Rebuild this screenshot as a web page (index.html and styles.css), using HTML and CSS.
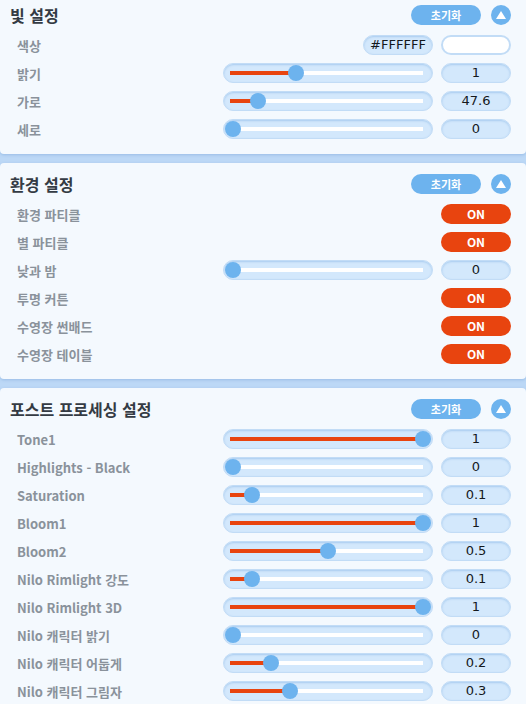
FILE: index.html
```html
<!DOCTYPE html>
<html lang="ko">
<head>
    <meta charset="UTF-8">
    <meta name="viewport" content="width=device-width, initial-scale=1.0">
    <title>설정</title>
    <link rel="stylesheet" href="styles.css">
</head>
<body>
    <div class="settings">
        <section class="panel">
            <div class="panel-head">
                <h2>빛 설정</h2>
                <button class="reset-btn">초기화</button>
                <button class="fold-btn"><span class="tri"></span></button>
            </div>
            <div class="row">
                <span class="label">색상</span>
                <div class="field hex">#FFFFFF</div>
                <div class="swatch"></div>
            </div>
            <div class="row">
                <span class="label">밝기</span>
                <div class="slider"><div class="track"><div class="fill" style="width: 33.3%"></div><div class="rail"><div class="thumb" style="left: 33.3%"></div></div></div></div>
                <div class="field">1</div>
            </div>
            <div class="row">
                <span class="label">가로</span>
                <div class="slider"><div class="track"><div class="fill" style="width: 13.2%"></div><div class="rail"><div class="thumb" style="left: 13.2%"></div></div></div></div>
                <div class="field">47.6</div>
            </div>
            <div class="row">
                <span class="label">세로</span>
                <div class="slider"><div class="track"><div class="fill" style="width: 0%"></div><div class="rail"><div class="thumb" style="left: 0%"></div></div></div></div>
                <div class="field">0</div>
            </div>
        </section>

        <section class="panel">
            <div class="panel-head">
                <h2>환경 설정</h2>
                <button class="reset-btn">초기화</button>
                <button class="fold-btn"><span class="tri"></span></button>
            </div>
            <div class="row">
                <span class="label">환경 파티클</span>
                <button class="toggle">ON</button>
            </div>
            <div class="row">
                <span class="label">별 파티클</span>
                <button class="toggle">ON</button>
            </div>
            <div class="row">
                <span class="label">낮과 밤</span>
                <div class="slider"><div class="track"><div class="fill" style="width: 0%"></div><div class="rail"><div class="thumb" style="left: 0%"></div></div></div></div>
                <div class="field">0</div>
            </div>
            <div class="row">
                <span class="label">투명 커튼</span>
                <button class="toggle">ON</button>
            </div>
            <div class="row">
                <span class="label">수영장 썬배드</span>
                <button class="toggle">ON</button>
            </div>
            <div class="row">
                <span class="label">수영장 테이블</span>
                <button class="toggle">ON</button>
            </div>
        </section>

        <section class="panel">
            <div class="panel-head">
                <h2>포스트 프로세싱 설정</h2>
                <button class="reset-btn">초기화</button>
                <button class="fold-btn"><span class="tri"></span></button>
            </div>
            <div class="row">
                <span class="label">Tone1</span>
                <div class="slider"><div class="track"><div class="fill" style="width: 100%"></div><div class="rail"><div class="thumb" style="left: 100%"></div></div></div></div>
                <div class="field">1</div>
            </div>
            <div class="row">
                <span class="label">Highlights - Black</span>
                <div class="slider"><div class="track"><div class="fill" style="width: 0%"></div><div class="rail"><div class="thumb" style="left: 0%"></div></div></div></div>
                <div class="field">0</div>
            </div>
            <div class="row">
                <span class="label">Saturation</span>
                <div class="slider"><div class="track"><div class="fill" style="width: 10%"></div><div class="rail"><div class="thumb" style="left: 10%"></div></div></div></div>
                <div class="field">0.1</div>
            </div>
            <div class="row">
                <span class="label">Bloom1</span>
                <div class="slider"><div class="track"><div class="fill" style="width: 100%"></div><div class="rail"><div class="thumb" style="left: 100%"></div></div></div></div>
                <div class="field">1</div>
            </div>
            <div class="row">
                <span class="label">Bloom2</span>
                <div class="slider"><div class="track"><div class="fill" style="width: 50%"></div><div class="rail"><div class="thumb" style="left: 50%"></div></div></div></div>
                <div class="field">0.5</div>
            </div>
            <div class="row">
                <span class="label">Nilo Rimlight 강도</span>
                <div class="slider"><div class="track"><div class="fill" style="width: 10%"></div><div class="rail"><div class="thumb" style="left: 10%"></div></div></div></div>
                <div class="field">0.1</div>
            </div>
            <div class="row">
                <span class="label">Nilo Rimlight 3D</span>
                <div class="slider"><div class="track"><div class="fill" style="width: 100%"></div><div class="rail"><div class="thumb" style="left: 100%"></div></div></div></div>
                <div class="field">1</div>
            </div>
            <div class="row">
                <span class="label">Nilo 캐릭터 밝기</span>
                <div class="slider"><div class="track"><div class="fill" style="width: 0%"></div><div class="rail"><div class="thumb" style="left: 0%"></div></div></div></div>
                <div class="field">0</div>
            </div>
            <div class="row">
                <span class="label">Nilo 캐릭터 어둡게</span>
                <div class="slider"><div class="track"><div class="fill" style="width: 20%"></div><div class="rail"><div class="thumb" style="left: 20%"></div></div></div></div>
                <div class="field">0.2</div>
            </div>
            <div class="row">
                <span class="label">Nilo 캐릭터 그림자</span>
                <div class="slider"><div class="track"><div class="fill" style="width: 30%"></div><div class="rail"><div class="thumb" style="left: 30%"></div></div></div></div>
                <div class="field">0.3</div>
            </div>
        </section>
    </div>
</body>
</html>
```

FILE: styles.css
```css
body {
    margin: 0;
    background: #bcd8f6;
    font-family: "Noto Sans CJK KR", "Noto Sans", sans-serif;
    overflow: hidden;
}
.settings {
    display: flex;
    flex-direction: column;
    gap: 9px;
    margin-top: -6px;
}
.panel {
    background: #f4f9fe;
    border-radius: 4px;
    padding: 11px 15px 11px 10px;
    box-shadow: 0 1px 3px rgba(90, 140, 200, 0.35);
}
.panel-head {
    display: flex;
    align-items: center;
    height: 20px;
    margin-bottom: 6px;
}
.panel-head h2 {
    flex: 1;
    margin: 0;
    font-size: 16px;
    font-weight: bold;
    color: #343b44;
    line-height: 20px;
}
.reset-btn {
    width: 70px;
    height: 20px;
    padding: 0;
    border: none;
    border-radius: 10px;
    background: #6db3ee;
    color: #fff;
    font-family: inherit;
    font-size: 11px;
    font-weight: bold;
    line-height: 20px;
}
.fold-btn {
    width: 20px;
    height: 20px;
    margin-left: 10px;
    padding: 0;
    border: none;
    border-radius: 50%;
    background: #6db3ee;
    display: flex;
    align-items: center;
    justify-content: center;
}
.tri {
    width: 0;
    height: 0;
    border-left: 5px solid transparent;
    border-right: 5px solid transparent;
    border-bottom: 8px solid #fff;
    margin-top: -1px;
}
.row {
    display: flex;
    align-items: center;
    gap: 8px;
    height: 28px;
    padding-left: 7px;
}
.label {
    flex: 1;
    font-size: 13px;
    font-weight: bold;
    color: #8a929b;
}
.slider {
    width: 210px;
    height: 20px;
    box-sizing: border-box;
    border-radius: 10px;
    background: #d3e8fc;
    border: 1px solid #c2dcf6;
    box-shadow: inset 0 1px 2px rgba(120, 170, 225, 0.45);
    padding: 0 9px 0 6px;
    display: flex;
    align-items: center;
}
.track {
    position: relative;
    flex: 1;
    height: 4px;
    background: #fff;
}
.fill {
    height: 100%;
    background: #e8440f;
}
/* thumb travels from 3px in to the right end of the track */
.rail {
    position: absolute;
    top: 0;
    bottom: 0;
    left: 3px;
    right: 0;
}
.thumb {
    position: absolute;
    top: 50%;
    width: 16px;
    height: 16px;
    margin: -8px 0 0 -8px;
    border-radius: 50%;
    background: #6db3ee;
}
.field {
    width: 70px;
    height: 20px;
    box-sizing: border-box;
    border-radius: 10px;
    background: #d3e8fc;
    border: 1px solid #c2dcf6;
    box-shadow: inset 0 1px 2px rgba(120, 170, 225, 0.45);
    font-family: "DejaVu Sans", sans-serif;
    font-size: 13px;
    color: #15191d;
    text-align: center;
    line-height: 18px;
}
.swatch {
    width: 70px;
    height: 20px;
    box-sizing: border-box;
    border-radius: 10px;
    background: #fff;
    border: 2px solid #c2dcf6;
}
.toggle {
    width: 70px;
    height: 20px;
    padding: 0;
    border: none;
    border-radius: 10px;
    background: #e8440f;
    color: #fff;
    font-family: inherit;
    font-size: 12px;
    font-weight: bold;
    line-height: 20px;
}
```
